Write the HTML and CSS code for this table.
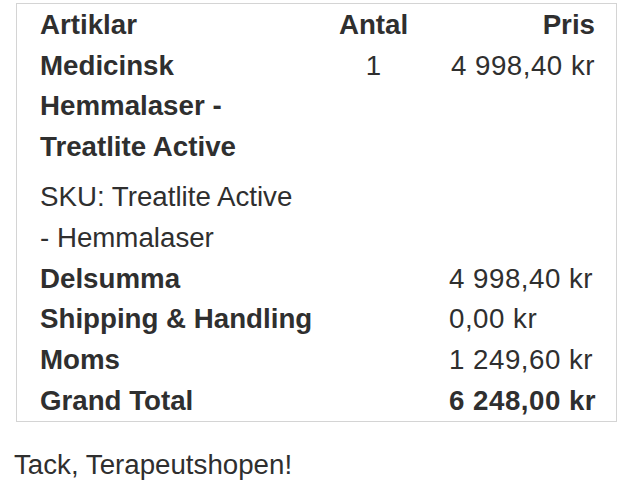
FILE: index.html
```html
<!DOCTYPE html>
<html lang="sv">
<head>
<meta charset="utf-8">
<title>Order</title>
<link rel="stylesheet" href="styles.css">
</head>
<body>
<div class="page">
  <div class="order">
    <table class="items">
      <colgroup>
        <col class="col-name">
        <col class="col-qty">
        <col class="col-price">
      </colgroup>
      <thead>
        <tr>
          <th class="c-name">Artiklar</th>
          <th class="c-qty">Antal</th>
          <th class="c-price">Pris</th>
        </tr>
      </thead>
      <tbody>
        <tr>
          <td class="c-name">
            <p class="prod">Medicinsk Hemmalaser - Treatlite Active</p>
            <p class="sku">SKU: Treatlite Active - Hemmalaser</p>
          </td>
          <td class="c-qty">1</td>
          <td class="c-price amount">4 998,40 kr</td>
        </tr>
      </tbody>
      <tfoot>
        <tr>
          <th class="t-label" colspan="2">Delsumma</th>
          <td class="t-value amount">4 998,40 kr</td>
        </tr>
        <tr>
          <th class="t-label" colspan="2">Shipping &amp; Handling</th>
          <td class="t-value amount">0,00 kr</td>
        </tr>
        <tr>
          <th class="t-label" colspan="2">Moms</th>
          <td class="t-value amount">1 249,60 kr</td>
        </tr>
        <tr>
          <th class="t-label" colspan="2">Grand Total</th>
          <td class="t-value t-grand amount">6 248,00 kr</td>
        </tr>
      </tfoot>
    </table>
  </div>
  <p class="thanks">Tack, Terapeutshopen!</p>
</div>
</body>
</html>
```
FILE: styles.css
```css
html, body {
  margin: 0;
  padding: 0;
  background: #ffffff;
}

body {
  font-family: "Liberation Sans", Arial, Helvetica, sans-serif;
  font-size: 27.7px;
  line-height: 40.7px;
  color: #2f2f2f;
}

.page {
  padding: 3px 0 0 14px;
}

.order {
  box-sizing: border-box;
  width: 601px;
  margin-left: 2px;
  border: 1px solid #d4d4d4;
  padding: 1px 21px 0 23px;
}

.items {
  width: 555px;
  table-layout: fixed;
  border-collapse: collapse;
  border-spacing: 0;
}

.col-name { width: 265px; }
.col-qty { width: 144px; }
.col-price { width: 146px; }

.items th,
.items td {
  padding: 0;
  vertical-align: top;
  font-weight: normal;
}

.items th {
  font-weight: bold;
}

.items .c-name { text-align: left; }

.items .c-qty {
  text-align: center;
  padding-right: 7px;
}

.items .c-price {
  text-align: right;
  white-space: nowrap;
}

.items .amount {
  letter-spacing: 0.5px;
}

.items .c-price.amount {
  margin-right: -0.5px;
}

.prod {
  margin: 0;
  font-weight: bold;
}

.sku {
  margin: 9.4px 0 0;
}

.items .t-label {
  text-align: left;
  white-space: nowrap;
}

.items .t-value {
  text-align: left;
  white-space: nowrap;
}

.items .t-grand {
  font-weight: bold;
}

.thanks {
  margin: 23px 0 0;
}
```
